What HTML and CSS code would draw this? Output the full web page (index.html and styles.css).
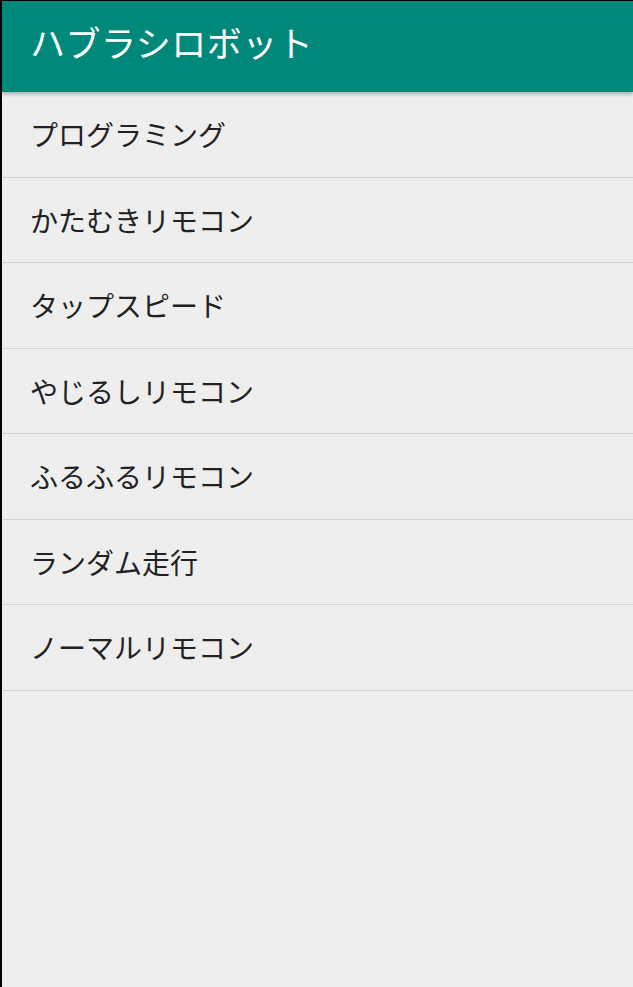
FILE: index.html
```html
<!DOCTYPE html>
<html lang="ja">
<head>
  <meta charset="UTF-8" />
  <meta name="viewport" content="width=device-width, initial-scale=1.0"/>
  <title>ハブラシロボット</title>
  <link rel="stylesheet" href="styles.css">
</head>
<body>
  <div class="screen">
    <header class="toolbar">ハブラシロボット</header>
    <ul class="menu">
      <li>プログラミング</li>
      <li>かたむきリモコン</li>
      <li>タップスピード</li>
      <li>やじるしリモコン</li>
      <li>ふるふるリモコン</li>
      <li>ランダム走行</li>
      <li>ノーマルリモコン</li>
    </ul>
  </div>
</body>
</html>
```

FILE: styles.css
```css
html, body {
  margin: 0;
  height: 100%;
}
body {
  background: #000;
  padding: 1px 0 0 2px;
  box-sizing: border-box;
  font-family: "Noto Sans CJK JP", "Noto Sans", sans-serif;
}
.screen {
  height: 100%;
  background: #eeeeee;
  overflow: hidden;
}
.toolbar {
  position: relative;
  height: 91px;
  box-sizing: border-box;
  background: #00897b;
  color: #fff;
  font-size: 35px;
  line-height: 81px;
  padding-left: 28px;
  letter-spacing: 0.5px;
  box-shadow: 0 2px 4px rgba(0, 0, 0, 0.3);
}
.menu {
  list-style: none;
  margin: 0;
  padding: 0;
}
.menu li {
  height: 85.5px;
  box-sizing: border-box;
  border-bottom: 1px solid #d4d4d4;
  padding-left: 28px;
  display: flex;
  align-items: center;
  font-size: 28px;
  color: #222;
}
```
